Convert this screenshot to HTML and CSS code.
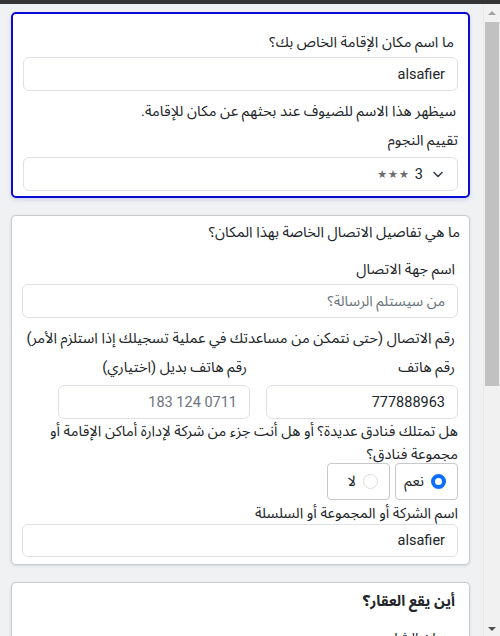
FILE: index.html
```html
<!DOCTYPE html>
<html lang="ar" dir="rtl">
<head>
<meta charset="utf-8">
<link rel="stylesheet" href="styles.css">
</head>
<body>
<div class="topbar"></div>
<div class="frame">
  <div class="page">
    <section class="card card-active">
      <div class="label first">ما اسم مكان الإقامة الخاص بك؟</div>
      <div class="input">alsafier</div>
      <div class="help">سيظهر هذا الاسم للضيوف عند بحثهم عن مكان للإقامة.</div>
      <div class="label">تقييم النجوم</div>
      <div class="input select">
        <svg class="chev" width="10" height="7" viewBox="0 0 10 7"><path d="M1 1.5 L5 5.5 L9 1.5" fill="none" stroke="#343a40" stroke-width="1.5" stroke-linecap="round" stroke-linejoin="round"/></svg>
        <span class="sel-text"><span class="num">3</span><span class="stars">★★★</span></span>
      </div>
    </section>

    <section class="card card-2">
      <div class="heading">ما هي تفاصيل الاتصال الخاصة بهذا المكان؟</div>
      <div class="label sub">اسم جهة الاتصال</div>
      <div class="input placeholder">من سيستلم الرسالة؟</div>
      <div class="label phone-intro">رقم الاتصال (حتى نتمكن من مساعدتك في عملية تسجيلك إذا استلزم الأمر)</div>
      <div class="phones">
        <div class="col">
          <div class="label">رقم هاتف</div>
          <div class="input"><span class="ltr">777888963</span></div>
        </div>
        <div class="col">
          <div class="label">رقم هاتف بديل (اختياري)</div>
          <div class="input placeholder"><span class="ltr">183 124 0711</span></div>
        </div>
      </div>
      <div class="question">هل تمتلك فنادق عديدة؟ أو هل أنت جزء من شركة لإدارة أماكن الإقامة أو مجموعة فنادق؟</div>
      <div class="radios">
        <div class="radio-box"><span class="radio checked"></span><span>نعم</span></div>
        <div class="radio-box"><span class="radio"></span><span>لا</span></div>
      </div>
      <div class="label tight">اسم الشركة أو المجموعة أو السلسلة</div>
      <div class="input short">alsafier</div>
    </section>

    <section class="card card-3">
      <div class="heading bold">أين يقع العقار؟</div>
      <div class="label sub">عنوان الشارع</div>
    </section>
  </div>
  <div class="scrollbar">
    <div class="sb-arrow up"></div>
    <div class="sb-thumb"></div>
    <div class="sb-rest"></div>
    <div class="sb-arrow down"></div>
  </div>
</div>
</body>
</html>
```

FILE: styles.css
```css
* { box-sizing: border-box; }
html, body { margin: 0; padding: 0; }
body {
  width: 500px;
  height: 636px;
  overflow: hidden;
  background: #f0f1f3;
  font-family: Roboto, "Noto Sans Arabic", "DejaVu Sans", sans-serif;
  font-size: 14.7px;
  color: #212529;
}
.topbar { height: 4px; background: #343434; }
.frame { display: flex; flex-direction: row; height: 632px; direction: ltr; }
.page {
  flex: 1;
  direction: rtl;
  padding: 8px 13px 0 11px;
  display: flex;
  flex-direction: column;
  gap: 17px;
}
.scrollbar {
  width: 17px;
  background: #f1f1f1;
  border-left: 1px solid #e8e8e8;
  display: flex;
  flex-direction: column;
  align-items: center;
}
.sb-arrow { width: 0; height: 0; border-left: 4px solid transparent; border-right: 4px solid transparent; }
.sb-arrow.up { border-bottom: 4px solid #a3a3a3; margin-top: 7px; margin-bottom: 7px; }
.sb-arrow.down { border-top: 4px solid #505050; margin-bottom: 5px; margin-top: 6px; }
.sb-thumb { width: 14px; height: 364px; background: #c1c1c1; }
.sb-rest { flex: 1; }

.card {
  background: #fff;
  border: 1px solid #c9cbce;
  border-radius: 5px;
  box-shadow: 0 1px 3px rgba(0,0,0,0.12);
  display: flex;
  flex-direction: column;
  flex-shrink: 0;
}
.card-active {
  border: 2px solid #0a0ad2;
  box-shadow: 0 2px 4px rgba(60,90,220,0.18);
  padding: 16px 10px 5px 10px;
}
.card-2 { padding: 4px 11px 7px 10px; }
.card-3 { padding: 6px 11px 0 10px; flex: 1; border-bottom: none; border-radius: 5px 5px 0 0; }

.label { line-height: 24px; }
.label.first { margin-right: 4px; }
.label.sub { margin-top: 13px; margin-right: 3px; }
.heading { line-height: 24px; margin-right: -2px; }
.heading.bold { font-weight: bold; margin-right: 3px; }
.help { line-height: 24px; margin-top: 8px; margin-right: 2px; margin-bottom: 5px; }
.input {
  height: 34px;
  border: 1px solid #dee2e6;
  border-radius: 6px;
  padding: 0 12px;
  display: flex;
  align-items: center;
  font-size: 14.5px;
  margin-top: 3px;
  color: #212529;
}
.input.placeholder { color: #6c757d; }
.input.short { height: 33px; margin-top: 0; }
.ltr { direction: ltr; unicode-bidi: embed; }
.select { gap: 10px; padding-right: 14px; margin-top: 5px; }
.sel-text { display: flex; align-items: center; gap: 5px; }
.stars { color: #6c6c6c; font-size: 11px; letter-spacing: 1px; }

.phone-intro { margin-top: 8px; margin-right: 3px; }
.phones { display: flex; gap: 16px; margin-top: 5px; }
.phones .col { width: 192px; display: flex; flex-direction: column; }
.phones .label { margin-right: 3px; }
.phones .input { height: 34px; margin-top: 6px; }
.question { line-height: 23px; margin-top: 1px; }
.radios { display: flex; gap: 5px; margin-top: -3px; }
.radio-box {
  width: 63px;
  height: 37px;
  border: 1px solid #c6c8ca;
  border-radius: 4px;
  display: flex;
  align-items: center;
  padding-right: 11px;
  gap: 7px;
}
.radio {
  width: 15px;
  height: 15px;
  border-radius: 50%;
  border: 1px solid #dcdcdc;
  background: #fff;
}
.radio.checked { border: 4px solid #0d6efd; background: #fff; }
.label.tight { line-height: 22px; margin-top: 2px; margin-right: 0; }
```
